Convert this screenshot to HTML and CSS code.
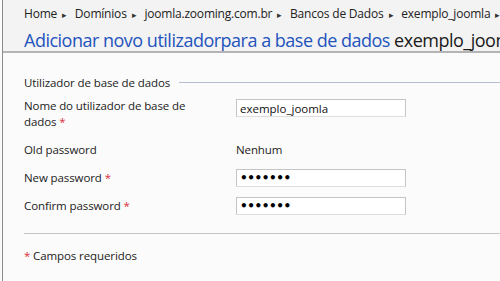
FILE: index.html
```html
<!DOCTYPE html>
<html lang="pt">
	<head>
		<meta charset="utf-8" />
		<title>Adicionar novo utilizador</title>
		<link rel="stylesheet" href="styles.css">
	</head>
	<body>
		<div class="page">
			<div class="header">
				<div class="breadcrumb">
					<span>Home</span><span class="sep">▸</span>
					<span>Domínios</span><span class="sep">▸</span>
					<span>joomla.zooming.com.br</span><span class="sep">▸</span>
					<span>Bancos de Dados</span><span class="sep">▸</span>
					<span>exemplo_joomla</span><span class="sep">▸</span>
				</div>
				<h1 class="title">Adicionar novo utilizadorpara a base de dados <span class="db">exemplo_joomla</span></h1>
			</div>
			<form class="content">
				<div class="section-title"><span>Utilizador de base de dados</span></div>
				<div class="form-row tall">
					<label for="nome">Nome do utilizador de base de dados <span class="req">*</span></label>
					<input type="text" id="nome" value="exemplo_joomla" />
				</div>
				<div class="form-row">
					<label>Old password</label>
					<span class="value">Nenhum</span>
				</div>
				<div class="form-row">
					<label for="newpw">New password <span class="req">*</span></label>
					<input type="password" id="newpw" value="1234567" />
				</div>
				<div class="form-row">
					<label for="confpw">Confirm password <span class="req">*</span></label>
					<input type="password" id="confpw" value="1234567" />
				</div>
				<hr />
				<p class="note"><span class="req">*</span> Campos requeridos</p>
			</form>
		</div>
	</body>
</html>
```

FILE: styles.css
```css
html, body {
	margin: 0;
	padding: 0;
}
body {
	font-family: "Open Sans", Arial, sans-serif;
	font-size: 11.5px;
	letter-spacing: -0.1px;
	color: #222;
	background-color: #fbfbfb;
	overflow: hidden;
}
.page {
	margin-left: 2px;
	border-left: 1px solid #8a8a8a;
	min-height: 281px;
}
.header {
	background-color: #f3f3f3;
	border-bottom: 2px solid #b4b4b4;
	padding: 5px 0 0 21px;
	height: 46px;
	white-space: nowrap;
	overflow: hidden;
}
.breadcrumb {
	height: 18px;
	line-height: 18px;
	font-size: 12px;
	letter-spacing: -0.2px;
}
.breadcrumb .sep {
	font-size: 9px;
	margin: 0 5px;
	color: #333;
}
.title {
	margin: 4px 0 0 0;
	font-weight: normal;
	font-size: 18px;
	letter-spacing: -0.5px;
	line-height: 26px;
	color: #2353bd;
}
.title .db {
	color: #1a1a1a;
}
.content {
	padding: 21px 0 0 21px;
}
.section-title {
	display: flex;
	align-items: center;
	height: 16px;
}
.section-title::after {
	content: "";
	flex: 1;
	border-top: 1px solid #b6bfd2;
	margin-left: 9px;
}
.form-row {
	display: flex;
	align-items: center;
	height: 28px;
}
.form-row.tall {
	height: 46px;
	align-items: flex-start;
	padding-top: 8px;
	box-sizing: border-box;
}
.form-row label {
	width: 212px;
	line-height: 16px;
}
.form-row.tall label {
	width: 180px;
	margin-right: 32px;
}
.form-row input {
	width: 170px;
	height: 18px;
	box-sizing: border-box;
	border: 1px solid #c4c4c4;
	border-bottom-color: #dedede;
	background: #fff;
	padding: 0 3px;
	font-family: inherit;
	font-size: 11.5px;
	color: #111;
	outline: none;
}
.form-row.tall input {
	margin-top: 1px;
}
.form-row input[type="password"] {
	font-family: "DejaVu Sans", sans-serif;
	font-size: 12px;
	font-weight: bold;
	letter-spacing: -0.4px;
	color: #000;
}
.value {
	line-height: 16px;
}
.req {
	color: #d9303a;
}
hr {
	border: 0;
	border-top: 1px solid #c4c4c4;
	margin: 13px 0 0 0;
}
.note {
	margin: 14px 0 0 0;
	line-height: 16px;
}
```
